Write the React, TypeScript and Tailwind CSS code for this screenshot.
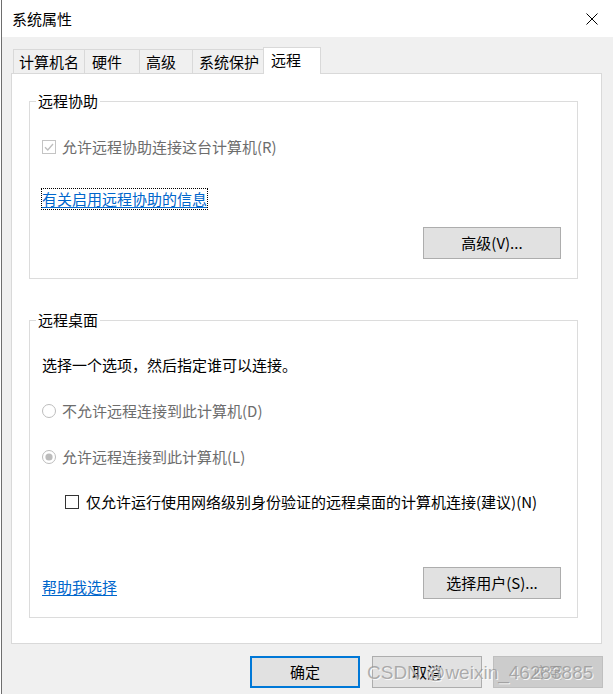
import React from "react";

const FONT = "font-['Noto_Sans_CJK_SC',sans-serif]";

function CheckBox({ checked, disabled }: { checked?: boolean; disabled?: boolean }) {
  const c = disabled ? "#c4c4c4" : "#333333";
  return (
    <svg width="14" height="14" viewBox="0 0 14 14" className="shrink-0">
      <rect x="0.5" y="0.5" width="13" height="13" fill="#fff" stroke={c} />
      {checked && (
        <path d="M3 7.2 L5.8 10 L11 4" fill="none" stroke={disabled ? "#bdbdbd" : "#000"} strokeWidth="1.3" />
      )}
    </svg>
  );
}

function Radio({ checked }: { checked?: boolean }) {
  return (
    <svg width="14" height="14" viewBox="0 0 14 14" className="shrink-0">
      <circle cx="7" cy="7" r="6.5" fill="#fff" stroke="#bcbcbc" />
      {checked && <circle cx="7" cy="7" r="3.6" fill="#bcbcbc" />}
    </svg>
  );
}

function Btn({ children, className = "" }: { children: React.ReactNode; className?: string }) {
  return (
    <div
      className={`w-[138px] h-[32px] flex items-center justify-center bg-[#e1e1e1] border border-[#adadad] text-[15px] leading-5 text-black ${className}`}
    >
      {children}
    </div>
  );
}

export default function App() {
  const tabs = [
    { label: "计算机名", w: "w-[71px]", pl: "pl-[5px]" },
    { label: "硬件", w: "w-[55px]", pl: "pl-[7px]" },
    { label: "高级", w: "w-[53px]", pl: "pl-[6px]" },
    { label: "系统保护", w: "w-[71px]", pl: "pl-[6px]" },
  ];

  return (
    <div className={`relative w-[613px] h-[694px] bg-white pl-px overflow-hidden ${FONT}`}>
      <div className="h-full border-l border-[#6e6e6e] bg-[#f0f0f0] flex flex-col">
        {/* title bar */}
        <div className="h-[37px] bg-white flex items-center justify-between pl-[10px] pr-[15px]">
          <span className="text-[15px] leading-5 text-black">系统属性</span>
          <svg width="12" height="12" viewBox="0 0 12 12">
            <path d="M0.5 0.5 L11.5 11.5 M11.5 0.5 L0.5 11.5" stroke="#000" strokeWidth="1" fill="none" />
          </svg>
        </div>

        <div className="ml-[9px] w-[591px]">
          {/* tabs */}
          <div className="mt-[10px] h-[26px] flex items-end pl-[2px] text-[15px] text-black">
            {tabs.map((t) => (
              <div
                key={t.label}
                className={`${t.w} ${t.pl} h-[24px] border-t border-l border-[#d9d9d9] bg-[#f0f0f0] flex items-center leading-5`}
              >
                {t.label}
              </div>
            ))}
            <div className="relative z-10 -mb-px w-[58px] h-[27px] pl-[7px] pb-[2px] border-t border-x border-[#d9d9d9] bg-white flex items-center leading-5">
              远程
            </div>
          </div>

          {/* panel */}
          <div className="h-[571px] border border-[#d9d9d9] bg-white pt-[17px] pl-[17px] text-[15px] leading-5">
            <fieldset className="w-[549px] border border-[#dcdcdc] px-[12px] pb-[19px]">
              <legend className="-ml-[6px] px-[2px] leading-5 text-black">远程协助</legend>
              <div className="mt-[26px] h-5 flex items-center gap-[6px] text-[#6d6d6d]">
                <CheckBox checked disabled />
                <span>允许远程协助连接这台计算机(R)</span>
              </div>
              <div className="mt-[32px] h-5 flex">
                <span className="text-[#0066cc] underline underline-offset-2 outline-1 outline-dotted outline-black">
                  有关启用远程协助的信息
                </span>
              </div>
              <div className="mt-[18px] flex justify-end pr-[4px]">
                <Btn>高级(V)...</Btn>
              </div>
            </fieldset>

            <fieldset className="mt-[31px] w-[549px] border border-[#dcdcdc] px-[12px] pb-[18px]">
              <legend className="-ml-[6px] px-[2px] leading-5 text-black">远程桌面</legend>
              <div className="mt-[25px] h-5 text-black">选择一个选项，然后指定谁可以连接。</div>
              <div className="mt-[26px] h-5 flex items-center gap-[6px] text-[#6d6d6d]">
                <Radio />
                <span>不允许远程连接到此计算机(D)</span>
              </div>
              <div className="mt-[26px] h-5 flex items-center gap-[6px] text-[#6d6d6d]">
                <Radio checked />
                <span>允许远程连接到此计算机(L)</span>
              </div>
              <div className="mt-[25px] h-5 flex items-center gap-[7px] pl-[23px] text-black">
                <CheckBox />
                <span>仅允许运行使用网络级别身份验证的远程桌面的计算机连接(建议)(N)</span>
              </div>
              <div className="mt-[55px] flex items-center justify-between pr-[4px]">
                <span className="mt-[7px] text-[#0066cc] underline underline-offset-2">帮助我选择</span>
                <Btn>选择用户(S)...</Btn>
              </div>
            </fieldset>
          </div>
        </div>

        {/* dialog buttons */}
        <div className="mt-[12px] flex justify-end gap-[11px] pr-[10px] text-[15px] leading-5">
          <div className="mr-px w-[110px] h-[32px] flex items-center justify-center bg-[#e1e1e1] border-2 border-[#0078d7] text-black">
            确定
          </div>
          <div className="w-[110px] h-[32px] flex items-center justify-center bg-[#e1e1e1] border border-[#adadad] text-black">
            取消
          </div>
          <div className="w-[110px] h-[32px] flex items-center justify-center bg-[#cccccc] border border-[#bfbfbf] text-[#a0a0a0]">
            应用
          </div>
        </div>
      </div>

      {/* watermark */}
      <div className="absolute left-[367px] top-[661px] font-['Liberation_Sans',sans-serif] text-[19px] leading-6 text-[#8f8f8f]/70 [text-shadow:1px_1px_0_rgba(255,255,255,0.8)] whitespace-nowrap pointer-events-none">
        CSDN @weixin_46283885
      </div>
    </div>
  );
}
